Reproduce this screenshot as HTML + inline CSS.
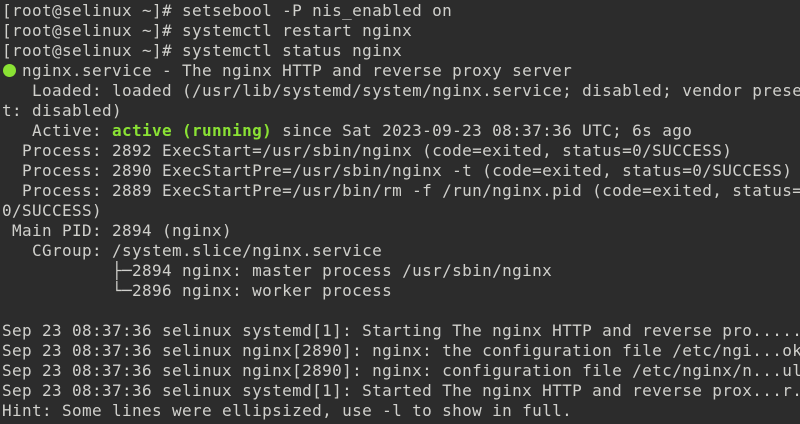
<!DOCTYPE html>
<html><head><meta charset="utf-8"><style>
html,body{margin:0;padding:0;background:#2c2c2c;width:800px;height:424px;overflow:hidden}
pre{margin:0;padding:1px 0 0 2px;font-family:"DejaVu Sans Mono","Liberation Mono",monospace;font-size:16px;letter-spacing:0.37px;line-height:20px;color:#d0d0cc;white-space:pre}
.g{color:#8ae234;font-weight:bold}
.dot{display:inline-block;width:13px;height:13px;border-radius:50%;background:#8ae234;vertical-align:-1px;margin-left:1px;margin-right:-4px}
</style></head><body><pre>[root@selinux ~]# setsebool -P nis_enabled on
[root@selinux ~]# systemctl restart nginx
[root@selinux ~]# systemctl status nginx
<span class="dot"></span> nginx.service - The nginx HTTP and reverse proxy server
   Loaded: loaded (/usr/lib/systemd/system/nginx.service; disabled; vendor prese
t: disabled)
   Active: <span class="g">active (running)</span> since Sat 2023-09-23 08:37:36 UTC; 6s ago
  Process: 2892 ExecStart=/usr/sbin/nginx (code=exited, status=0/SUCCESS)
  Process: 2890 ExecStartPre=/usr/sbin/nginx -t (code=exited, status=0/SUCCESS)
  Process: 2889 ExecStartPre=/usr/bin/rm -f /run/nginx.pid (code=exited, status=
0/SUCCESS)
 Main PID: 2894 (nginx)
   CGroup: /system.slice/nginx.service
           ├─2894 nginx: master process /usr/sbin/nginx
           └─2896 nginx: worker process

Sep 23 08:37:36 selinux systemd[1]: Starting The nginx HTTP and reverse pro.....
Sep 23 08:37:36 selinux nginx[2890]: nginx: the configuration file /etc/ngi...ok
Sep 23 08:37:36 selinux nginx[2890]: nginx: configuration file /etc/nginx/n...ul
Sep 23 08:37:36 selinux systemd[1]: Started The nginx HTTP and reverse prox...r.
Hint: Some lines were ellipsized, use -l to show in full.
</pre></body></html>
